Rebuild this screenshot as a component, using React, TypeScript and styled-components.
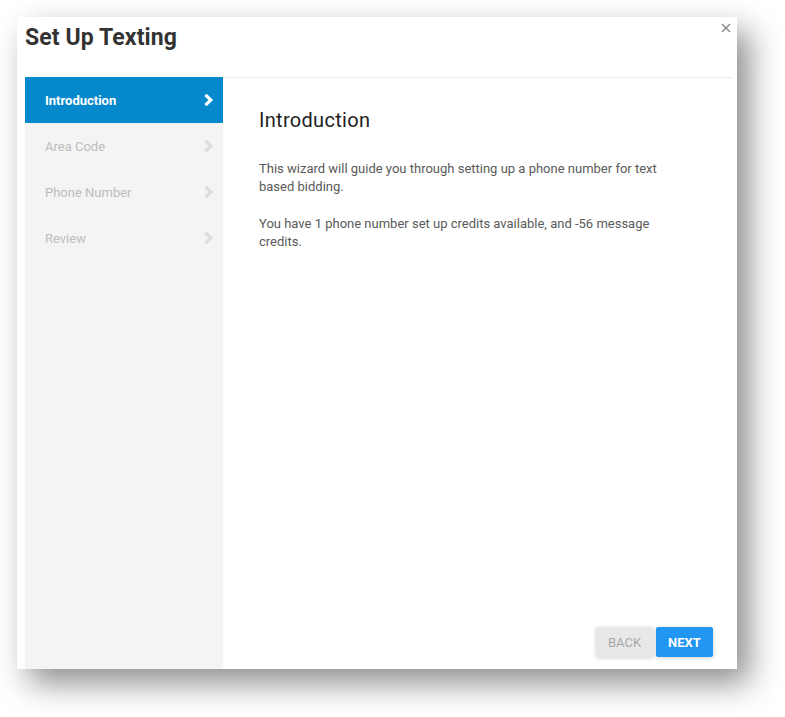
import * as React from 'react';
import styled, { createGlobalStyle } from 'styled-components';

const GlobalStyle = createGlobalStyle`
  html, body {
    margin: 0;
    padding: 0;
    background: #fff;
    font-family: Roboto, "Liberation Sans", Arial, sans-serif;
  }
`;

const Page = styled.div`
  padding: 17px 0 48px 17px;
`;

const Dialog = styled.div`
  position: relative;
  width: 720px;
  height: 652px;
  background: #fff;
  box-shadow: 12px 14px 30px rgba(0, 0, 0, 0.45);
  display: flex;
  flex-direction: column;
  padding: 0 4px 0 8px;
  box-sizing: border-box;
`;

const Header = styled.div`
  height: 61px;
  border-bottom: 1px solid #ececec;
  box-sizing: border-box;
  display: flex;
  align-items: flex-start;
`;

const Title = styled.h1`
  margin: 7px 0 0 0;
  font-size: 23px;
  line-height: 28px;
  font-weight: 700;
  color: #333;
  letter-spacing: 0.1px;
`;

const Close = styled.button`
  position: absolute;
  top: 5px;
  right: 5px;
  width: 12px;
  height: 12px;
  padding: 0;
  border: 0;
  background: none;
  display: flex;
  align-items: center;
  justify-content: center;
`;

const Body = styled.div`
  flex: 1;
  display: flex;
  margin-top: -1px;
  margin-right: -4px;
`;

const Sidebar = styled.ul`
  list-style: none;
  margin: 0;
  padding: 0;
  width: 198px;
  background: #f4f4f4;
`;

const Step = styled.li<{ $active?: boolean }>`
  height: 46px;
  display: flex;
  align-items: center;
  justify-content: space-between;
  padding: 0 9px 0 20px;
  font-size: 13px;
  font-weight: ${p => (p.$active ? 700 : 400)};
  color: ${p => (p.$active ? '#fff' : '#bdbdbd')};
  background: ${p => (p.$active ? '#0688cc' : 'transparent')};
`;

const Content = styled.div`
  flex: 1;
  display: flex;
  flex-direction: column;
  padding: 31px 24px 12px 36px;
`;

const Heading = styled.h2`
  margin: 0 0 28px 0;
  font-size: 20px;
  line-height: 24px;
  font-weight: 400;
  color: #222;
  letter-spacing: 0.3px;
`;

const Para = styled.p`
  margin: 0 0 19px 0;
  max-width: 425px;
  font-size: 13px;
  line-height: 18px;
  color: #5a5a5a;
`;

const Actions = styled.div`
  margin-top: auto;
  display: flex;
  justify-content: flex-end;
  gap: 3px;
`;

const Button = styled.button<{ $primary?: boolean }>`
  width: 57px;
  height: 30px;
  border: 0;
  border-radius: 2px;
  font-family: Roboto, "Liberation Sans", Arial, sans-serif;
  font-size: 13px;
  font-weight: ${p => (p.$primary ? 700 : 400)};
  color: ${p => (p.$primary ? '#fff' : '#a8a8a8')};
  background: ${p => (p.$primary ? '#2196f3' : '#e8e8e8')};
  box-shadow: 0 1px 4px rgba(0, 0, 0, 0.18);
  padding: 0;
`;

const Chevron = ({ color }: { color: string }) => (
  <svg width="10" height="12" viewBox="0 0 10 12">
    <polyline
      points="2.6,2 6.8,6 2.6,10"
      fill="none"
      stroke={color}
      strokeWidth="3.2"
      strokeLinecap="square"
    />
  </svg>
);

const steps = ['Introduction', 'Area Code', 'Phone Number', 'Review'];

export default function App() {
  return (
    <>
      <GlobalStyle />
      <Page>
        <Dialog>
          <Header>
            <Title>Set Up Texting</Title>
          </Header>
          <Close aria-label="close">
            <svg width="10" height="10" viewBox="0 0 10 10">
              <path d="M1 1L9 9M9 1L1 9" stroke="#888" strokeWidth="1.4" />
            </svg>
          </Close>
          <Body>
            <Sidebar>
              {steps.map((s, i) => (
                <Step key={s} $active={i === 0}>
                  {s}
                  <Chevron color={i === 0 ? '#fff' : '#dcdcdc'} />
                </Step>
              ))}
            </Sidebar>
            <Content>
              <Heading>Introduction</Heading>
              <Para>
                This wizard will guide you through setting up a phone number for text based bidding.
              </Para>
              <Para>
                You have 1 phone number set up credits available, and -56 message credits.
              </Para>
              <Actions>
                <Button>BACK</Button>
                <Button $primary>NEXT</Button>
              </Actions>
            </Content>
          </Body>
        </Dialog>
      </Page>
    </>
  );
}
